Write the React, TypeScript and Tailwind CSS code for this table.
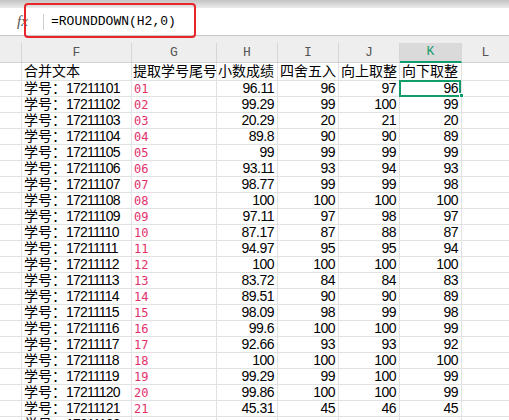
import React from 'react';

const rows: [string, string, string, string, string, string][] = [
  ['17211101', '01', '96.11', '96', '97', '96'],
  ['17211102', '02', '99.29', '99', '100', '99'],
  ['17211103', '03', '20.29', '20', '21', '20'],
  ['17211104', '04', '89.8', '90', '90', '89'],
  ['17211105', '05', '99', '99', '99', '99'],
  ['17211106', '06', '93.11', '93', '94', '93'],
  ['17211107', '07', '98.77', '99', '99', '98'],
  ['17211108', '08', '100', '100', '100', '100'],
  ['17211109', '09', '97.11', '97', '98', '97'],
  ['17211110', '10', '87.17', '87', '88', '87'],
  ['17211111', '11', '94.97', '95', '95', '94'],
  ['17211112', '12', '100', '100', '100', '100'],
  ['17211113', '13', '83.72', '84', '84', '83'],
  ['17211114', '14', '89.51', '90', '90', '89'],
  ['17211115', '15', '98.09', '98', '99', '98'],
  ['17211116', '16', '99.6', '100', '100', '99'],
  ['17211117', '17', '92.66', '93', '93', '92'],
  ['17211118', '18', '100', '100', '100', '100'],
  ['17211119', '19', '99.29', '99', '100', '99'],
  ['17211120', '20', '99.86', '100', '100', '99'],
  ['17211121', '21', '45.31', '45', '46', '45'],
  ['17211122', '', '', '', '', ''],
];

const cjk = { fontFamily: '"Liberation Sans", "Noto Sans CJK SC", sans-serif' };

const App: React.FC = () => {
  return (
    <div className="w-[509px] h-[420px] overflow-hidden bg-white relative" style={cjk}>
      {/* toolbar edge */}
      <div className="h-[8px] bg-gradient-to-b from-[#c4c4c4] to-[#ebebeb]" />

      {/* formula bar */}
      <div className="h-[28px] flex items-center border-b border-[#c6c6c6] bg-white">
        <span className="w-[43px] pl-[17px] text-[15px] italic text-[#555]" style={{ fontFamily: '"Liberation Serif", serif' }}>
          fx
        </span>
        <span className="h-[16px] w-px bg-[#cfcfcf]" />
        <span className="ml-[7px] text-[13px] text-black" style={{ fontFamily: '"Liberation Mono", monospace' }}>
          =ROUNDDOWN(H2,0)
        </span>
      </div>
      {/* annotation box */}
      <div className="absolute left-[24px] top-[3px] w-[172px] h-[35px] rounded-[4px] border-2 border-[#e8262a]" />

      {/* column headers */}
      <div className="bg-[#eeeeee] pt-[7px]" style={{ fontFamily: '"Liberation Mono", monospace' }}>
        <div className="flex h-[20px] border-b border-[#d2d2d2] text-[13px] text-[#555]">
          <div className="w-[22px] border-r border-[#d6d6d6]" />
          <div className="w-[110px] border-r border-[#d6d6d6] flex items-center justify-center">F</div>
          <div className="w-[85px] border-r border-[#d6d6d6] flex items-center justify-center">G</div>
          <div className="w-[61px] border-r border-[#d6d6d6] flex items-center justify-center">H</div>
          <div className="w-[61px] border-r border-[#d6d6d6] flex items-center justify-center">I</div>
          <div className="w-[61px] border-r border-[#d6d6d6] flex items-center justify-center">J</div>
          <div className="w-[62px] border-r border-[#d6d6d6] bg-[#dadada] text-[#129c6a] border-b-2 border-b-[#129c6a] -mb-px flex items-center justify-center">
            K
          </div>
          <div className="flex-1 flex items-center justify-center">L</div>
        </div>
      </div>

      {/* title row */}
      <div className="flex h-[18px] border-b border-[#e2e2e2] text-[14px] leading-[17px] text-black">
        <div className="w-[22px] border-r border-[#e2e2e2]" />
        <div className="w-[110px] border-r border-[#e2e2e2] pl-[2px] whitespace-nowrap">合并文本</div>
        <div className="w-[85px] border-r border-[#e2e2e2] pl-[1px] whitespace-nowrap">提取学号尾号</div>
        <div className="w-[61px] border-r border-[#e2e2e2] pl-[1px] whitespace-nowrap">小数成绩</div>
        <div className="w-[61px] border-r border-[#e2e2e2] pl-[2px] whitespace-nowrap">四舍五入</div>
        <div className="w-[61px] border-r border-[#e2e2e2] pl-[2px] whitespace-nowrap">向上取整</div>
        <div className="w-[62px] border-r border-[#e2e2e2] pl-[2px] whitespace-nowrap">向下取整</div>
        <div className="flex-1" />
      </div>

      {/* data rows */}
      {rows.map((r, i) => (
        <div key={i} className="flex h-[16px] border-b border-[#e2e2e2] text-[14px] leading-[15px] text-black">
          <div className="w-[22px] border-r border-[#e2e2e2]" />
          <div className="w-[110px] border-r border-[#e2e2e2] pl-[2px] whitespace-nowrap">
            学号：<span className="tracking-[-0.8px]">{r[0]}</span>
          </div>
          <div
            className="w-[85px] border-r border-[#e2e2e2] pl-[2px] pt-px text-[12px] text-[#e2306b]"
            style={{ fontFamily: '"DejaVu Sans Mono", monospace' }}
          >
            {r[1]}
          </div>
          <div className="w-[61px] border-r border-[#e2e2e2] pr-[3px] text-right tracking-[-0.5px]">{r[2]}</div>
          <div className="w-[61px] border-r border-[#e2e2e2] pr-[3px] text-right tracking-[-0.5px]">{r[3]}</div>
          <div className="w-[61px] border-r border-[#e2e2e2] pr-[3px] text-right tracking-[-0.5px]">{r[4]}</div>
          <div className="w-[62px] border-r border-[#e2e2e2] pr-[3px] text-right tracking-[-0.5px] relative">
            {r[5]}
            {i === 0 && (
              <>
                <div className="absolute -left-[1px] -top-[1px] w-[62px] h-[17px] border-2 border-[#129c6a]" />
                <div className="absolute -right-[3px] -bottom-[2px] w-[5px] h-[5px] bg-[#129c6a] border border-white" />
              </>
            )}
          </div>
          <div className="flex-1" />
        </div>
      ))}
    </div>
  );
};

export default App;
